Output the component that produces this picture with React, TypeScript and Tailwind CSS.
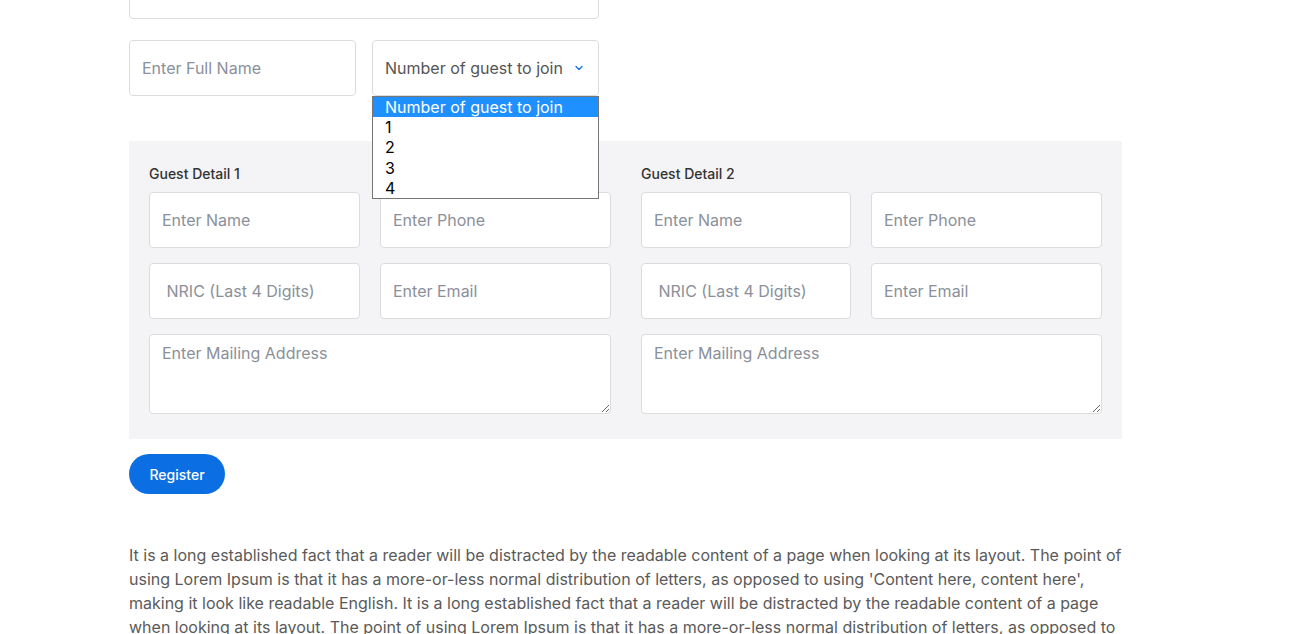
import { ChevronDown } from 'lucide-react';

const inputCls =
  'h-[56px] rounded-[4px] border border-[#dcdcdc] bg-white px-[12px] text-[16px] text-[#333] placeholder:text-[#8b9099] outline-none';

function GuestDetail({ index, narrow }: { index: number; narrow?: boolean }) {
  return (
    <div>
      <div className="mb-[8px] text-[14px] font-medium leading-[20px] text-[#333]">
        Guest Detail {index}
      </div>
      <div
        className={
          'grid gap-x-[20px] gap-y-[15px] ' +
          (narrow ? 'grid-cols-[210px_231px]' : 'grid-cols-[211px_231px]')
        }
      >
        <input className={inputCls + ' w-full'} placeholder="Enter Name" />
        <input className={inputCls + ' w-full'} placeholder="Enter Phone" />
        <input className={inputCls + ' w-full'} placeholder=" NRIC (Last 4 Digits)" />
        <input className={inputCls + ' w-full'} placeholder="Enter Email" />
        <textarea
          className="col-span-2 h-[80px] w-full resize-y rounded-[4px] border border-[#dcdcdc] bg-white px-[12px] py-[6px] text-[16px] text-[#333] placeholder:text-[#8b9099] outline-none"
          placeholder="Enter Mailing Address"
        />
      </div>
    </div>
  );
}

export default function App() {
  const options = ['Number of guest to join', '1', '2', '3', '4'];

  return (
    <div className="min-h-screen overflow-hidden bg-white font-['Inter',sans-serif]">
      <div className="ml-[129px] w-[993px]">
        {/* previous field, scrolled mostly out of view */}
        <div className="-mt-[37px] w-[470px]">
          <input className={inputCls + ' w-full'} />
        </div>

        <div className="mt-[21px] flex gap-[16px]">
          <input className={inputCls + ' w-[227px] shrink-0'} placeholder="Enter Full Name" />
          <div className="relative w-[227px] shrink-0">
            <div className="flex h-[56px] items-center justify-between whitespace-nowrap rounded-[4px] border border-[#dcdcdc] bg-white pl-[12px] pr-[13px] text-[16px] text-[#555]">
              <span>Number of guest to join</span>
              <ChevronDown className="h-[12px] w-[12px] text-[#0b6fe3]" strokeWidth={2.5} />
            </div>
            {/* open option list */}
            <div className="absolute left-0 top-[56px] z-10 w-[227px] border border-[#767676] bg-white text-[16px] leading-[20px] text-black">
              {options.map((o, i) => (
                <div
                  key={o}
                  className={
                    'h-[20.2px] whitespace-nowrap px-[12px] ' +
                    (i === 0 ? 'bg-[#1e90ff] text-white' : '')
                  }
                >
                  {o}
                </div>
              ))}
            </div>
          </div>
        </div>

        <div className="mt-[45px] grid grid-cols-[462px_461px] gap-x-[30px] bg-[#f4f4f6] px-[20px] pb-[25px] pt-[23px]">
          <GuestDetail index={1} />
          <GuestDetail index={2} narrow />
        </div>

        <button className="mt-[15px] h-[40px] w-[96px] rounded-full bg-[#0b6fe3] text-[14px] font-medium text-white">
          Register
        </button>

        <p className="mt-[49px] text-[16px] leading-[24px] text-[#5a5a5a]">
          It is a long established fact that a reader will be distracted by the readable content
          of a page when looking at its layout. The point of using Lorem Ipsum is that it has a
          more-or-less normal distribution of letters, as opposed to using 'Content here, content
          here', making it look like readable English. It is a long established fact that a reader
          will be distracted by the readable content of a page when looking at its layout. The
          point of using Lorem Ipsum is that it has a more-or-less normal distribution of letters,
          as opposed to using 'Content here, content here', making it look like readable English.
        </p>
      </div>
    </div>
  );
}
